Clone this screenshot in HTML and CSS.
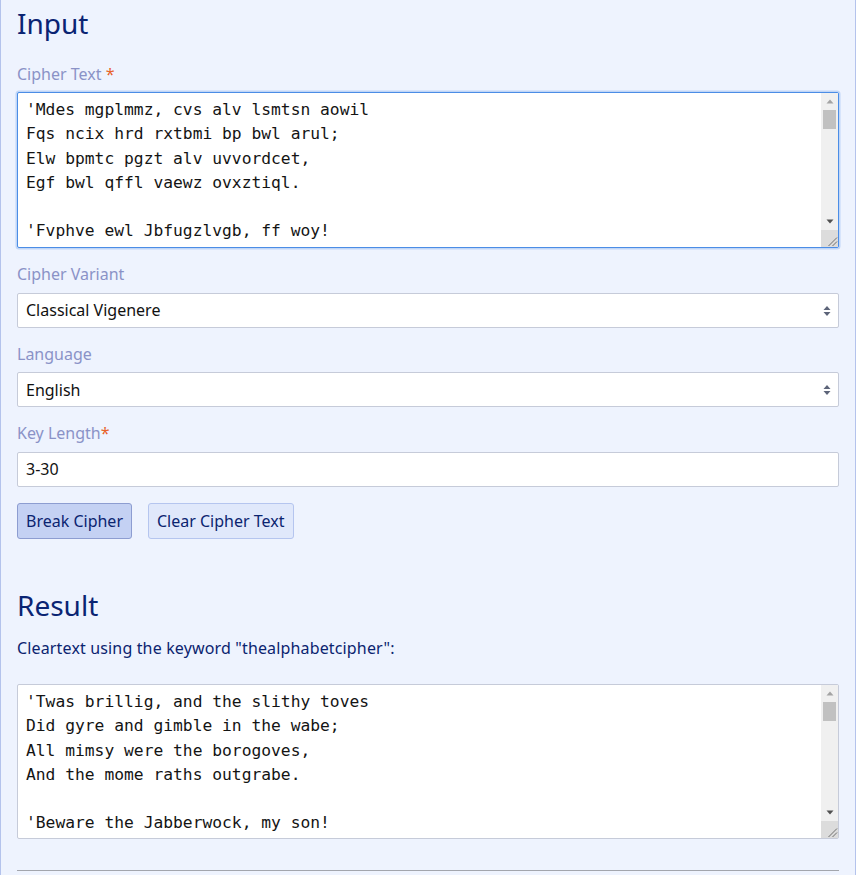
FILE: index.html
```html
<!DOCTYPE html>
<html lang="en">
<head>
<meta charset="utf-8">
<title>Vigenere Cipher Breaker</title>
<link rel="stylesheet" href="styles.css">
</head>
<body>
<div class="panel">
  <h2 class="heading heading-input">Input</h2>

  <div class="field field-first">
    <label class="label" for="cipher">Cipher Text <span class="req">*</span></label>
    <div class="area-box area-focus">
      <textarea id="cipher" class="area" spellcheck="false">'Mdes mgplmmz, cvs alv lsmtsn aowil
Fqs ncix hrd rxtbmi bp bwl arul;
Elw bpmtc pgzt alv uvvordcet,
Egf bwl qffl vaewz ovxztiql.

'Fvphve ewl Jbfugzlvgb, ff woy!
Ioe kepu bwhx sbai, tst jlbal vppa grmjl!
Bplhrf xag Rjinlu imro, pud tlnp
Bwl jintmofh Iaohxtachxta!

Oi tzdr hjw oqzehp jpvvd tc oaoh:
Eqvv amdx ale xpuxpqx hwt oi jhbkhe —
Hv rfwmgl wl fp moi Tfbaun xkgm,
Puh jmvsd lloimi bp bwvyxaa.

Eno, pz io yyhqho xyhbkhe wl sushf,
Bwl Nruiirhdjk, xmmj mnlw fy mpaxt,
Jani pjqumpzgn xhcdbgi xag bjskvr dsoo,
Pud cykdttk ej ba gaxt!

Vnf, xpq! Wcl, xnh! Hrd ewyovka cvs alihbkh
Ewl vpvict qseux dine huidoxt-achgb!
Al peqi pt eitf, ick azmo mtd wlae
Lx ymca krebqpsxug cevm.

Ick lrla xhzj zlbmg vpt Qesulvwzrr?
Cpqx vw bf eifz, qy mthmjwa dwn!
V jitinofh kaz! Gtntdvl! Ttspaj!
Wl ciskvttk me apw jzn.

'Awbw utqasmx, tuh tst zljxaa bdcij
Wph gjgl aoh zkuqsi zg ale hpie;
Bpe oqbzc nxyi tst iosszqdtz,
Eew ale xdte semja dbxxkhfe.</textarea>
      <div class="sbar" aria-hidden="true">
        <div class="sbar-btn">
          <svg width="8" height="5" viewBox="0 0 8 5"><path d="M4 0.5 L7.5 4.5 L0.5 4.5 Z" fill="#a3a3a3"/></svg>
        </div>
        <div class="sbar-track"><div class="sbar-thumb"></div></div>
        <div class="sbar-btn">
          <svg width="8" height="5" viewBox="0 0 8 5"><path d="M0.5 0.5 L7.5 0.5 L4 4.5 Z" fill="#505050"/></svg>
        </div>
        <div class="sbar-corner">
          <svg width="17" height="17" viewBox="0 0 17 17"><path d="M7.5 16 L16 7.5 M11.5 16 L16 11.5" stroke="#6e6e6e" stroke-width="1" fill="none"/></svg>
        </div>
      </div>
    </div>
  </div>

  <div class="field">
    <label class="label" for="variant">Cipher Variant</label>
    <div class="select-wrap">
      <select id="variant" class="control select">
        <option>Classical Vigenere</option>
        <option>Beaufort</option>
        <option>Variant Beaufort</option>
      </select>
      <svg class="select-arrow" width="8" height="12" viewBox="0 0 8 12" aria-hidden="true">
        <path d="M4 1 L7.5 5 L0.5 5 Z" fill="#5d6479"/>
        <path d="M0.5 7 L7.5 7 L4 11 Z" fill="#5d6479"/>
      </svg>
    </div>
  </div>

  <div class="field">
    <label class="label" for="language">Language</label>
    <div class="select-wrap">
      <select id="language" class="control select">
        <option>English</option>
        <option>German</option>
        <option>French</option>
      </select>
      <svg class="select-arrow" width="8" height="12" viewBox="0 0 8 12" aria-hidden="true">
        <path d="M4 1 L7.5 5 L0.5 5 Z" fill="#5d6479"/>
        <path d="M0.5 7 L7.5 7 L4 11 Z" fill="#5d6479"/>
      </svg>
    </div>
  </div>

  <div class="field">
    <label class="label" for="keylen">Key Length<span class="req">*</span></label>
    <input id="keylen" class="control" type="text" value="3-30">
  </div>

  <div class="buttons">
    <button class="btn btn-primary" type="button">Break Cipher</button>
    <button class="btn btn-secondary" type="button">Clear Cipher Text</button>
  </div>

  <h2 class="heading heading-result">Result</h2>
  <p class="result-note">Cleartext using the keyword "thealphabetcipher":</p>

  <div class="area-box area-result">
    <textarea class="area" spellcheck="false">'Twas brillig, and the slithy toves
Did gyre and gimble in the wabe;
All mimsy were the borogoves,
And the mome raths outgrabe.

'Beware the Jabberwock, my son!
The jaws that bite, the claws that catch!
Beware the Jubjub bird, and shun
The frumious Bandersnatch!

He took his vorpal sword in hand:
Long time the manxome foe he sought —
So rested he by the Tumtum tree,
And stood awhile in thought.

And, as in uffish thought he stood,
The Jabberwock, with eyes of flame,
Came whiffling through the tulgey wood,
And burbled as it came!

One, two! One, two! And through and through
The vorpal blade went snicker-snack!
He left it dead, and with its head
He went galumphing back.

And hast thou slain the Jabberwock?
Come to my arms, my beamish boy!
O frabjous day! Callooh! Callay!
He chortled in his joy.

'Twas brillig, and the slithy toves
Did gyre and gimble in the wabe;
All mimsy were the borogoves,
And the mome raths outgrabe.</textarea>
    <div class="sbar" aria-hidden="true">
      <div class="sbar-btn">
        <svg width="8" height="5" viewBox="0 0 8 5"><path d="M4 0.5 L7.5 4.5 L0.5 4.5 Z" fill="#a3a3a3"/></svg>
      </div>
      <div class="sbar-track"><div class="sbar-thumb"></div></div>
      <div class="sbar-btn">
        <svg width="8" height="5" viewBox="0 0 8 5"><path d="M0.5 0.5 L7.5 0.5 L4 4.5 Z" fill="#505050"/></svg>
      </div>
      <div class="sbar-corner">
        <svg width="17" height="17" viewBox="0 0 17 17"><path d="M7.5 16 L16 7.5 M11.5 16 L16 11.5" stroke="#6e6e6e" stroke-width="1" fill="none"/></svg>
      </div>
    </div>
  </div>

  <hr class="rule">
</div>
</body>
</html>
```

FILE: styles.css
```css
html, body {
  margin: 0;
  padding: 0;
  background: #ffffff;
}

body {
  font-family: "Noto Sans", "Open Sans", sans-serif;
  font-size: 16px;
  line-height: 24px;
  color: #0b2470;
}

.panel {
  width: 856px;
  box-sizing: border-box;
  min-height: 875px;
  background: #eef3fe;
  border-left: 1px solid #b4c3ec;
  border-right: 1px solid #b4c3ec;
  padding: 6px 16px 0 16px;
}

.heading {
  margin: 0;
  font-size: 28px;
  line-height: 34px;
  font-weight: 400;
  color: #0a2473;
}

.field {
  margin-top: 14px;
  display: flex;
  flex-direction: column;
}

.field-first {
  margin-top: 21.5px;
}

.label {
  display: block;
  margin-bottom: 6.5px;
  color: #8a92c7;
}

.req {
  color: #e8622a;
}

/* textarea with its scrollbar column */
.area-box {
  display: flex;
  height: 156px;
  box-sizing: border-box;
  background: #ffffff;
  border: 1px solid #c6cbd9;
  border-radius: 2px;
}

.area-focus {
  border-color: #4b8de6;
  box-shadow: 0 0 0 1.5px rgba(75, 141, 230, 0.28);
}

.area {
  flex: 1;
  min-width: 0;
  height: 100%;
  box-sizing: border-box;
  margin: 0;
  padding: 5px 8px 4px 8px;
  font-family: "DejaVu Sans Mono", "Liberation Mono", monospace;
  font-size: 16.3px;
  line-height: 24.3px;
  color: #141414;
  background: transparent;
  border: none;
  resize: none;
  overflow: hidden;
  white-space: pre;
  outline: none;
}

.sbar {
  width: 17px;
  flex: none;
  display: flex;
  flex-direction: column;
  background: #f0f0f0;
}

.sbar-btn {
  height: 17px;
  flex: none;
  display: flex;
  align-items: center;
  justify-content: center;
}

.sbar-track {
  flex: 1;
  padding: 0 2px;
}

.sbar-thumb {
  height: 19px;
  background: #c1c1c1;
}

.sbar-corner {
  height: 17px;
  flex: none;
  background: #dcdcdc;
}

.sbar-corner svg {
  display: block;
}

.control {
  display: block;
  width: 100%;
  box-sizing: border-box;
  height: 35px;
  margin: 0;
  padding: 0 8px;
  font-family: "Noto Sans", "Open Sans", sans-serif;
  font-size: 16px;
  color: #111111;
  background: #ffffff;
  border: 1px solid #c6cbd9;
  border-radius: 2px;
  outline: none;
}

.select-wrap {
  position: relative;
}

.select {
  appearance: none;
  -webkit-appearance: none;
  padding-right: 28px;
}

.select-arrow {
  position: absolute;
  right: 8px;
  top: 12px;
  pointer-events: none;
}

.buttons {
  display: flex;
  gap: 16px;
  margin-top: 16px;
}

.btn {
  height: 36px;
  padding: 0 8px;
  font-family: "Noto Sans", "Open Sans", sans-serif;
  font-size: 16px;
  color: #0b2470;
  border-radius: 3px;
  cursor: pointer;
}

.btn-primary {
  background: #c4d1f3;
  border: 1px solid #8d9dd1;
}

.btn-secondary {
  background: #e0e8fb;
  border: 1px solid #b5c5ef;
}

.heading-result {
  margin-top: 49px;
}

.result-note {
  margin: 14px 0 0 0;
  color: #0b2470;
  letter-spacing: 0.15px;
}

.area-result {
  margin-top: 24.5px;
  height: 155px;
}

.rule {
  margin: 31px 0 0 0;
  border: none;
  border-top: 1px solid #a3a6ad;
  height: 0;
}
```
